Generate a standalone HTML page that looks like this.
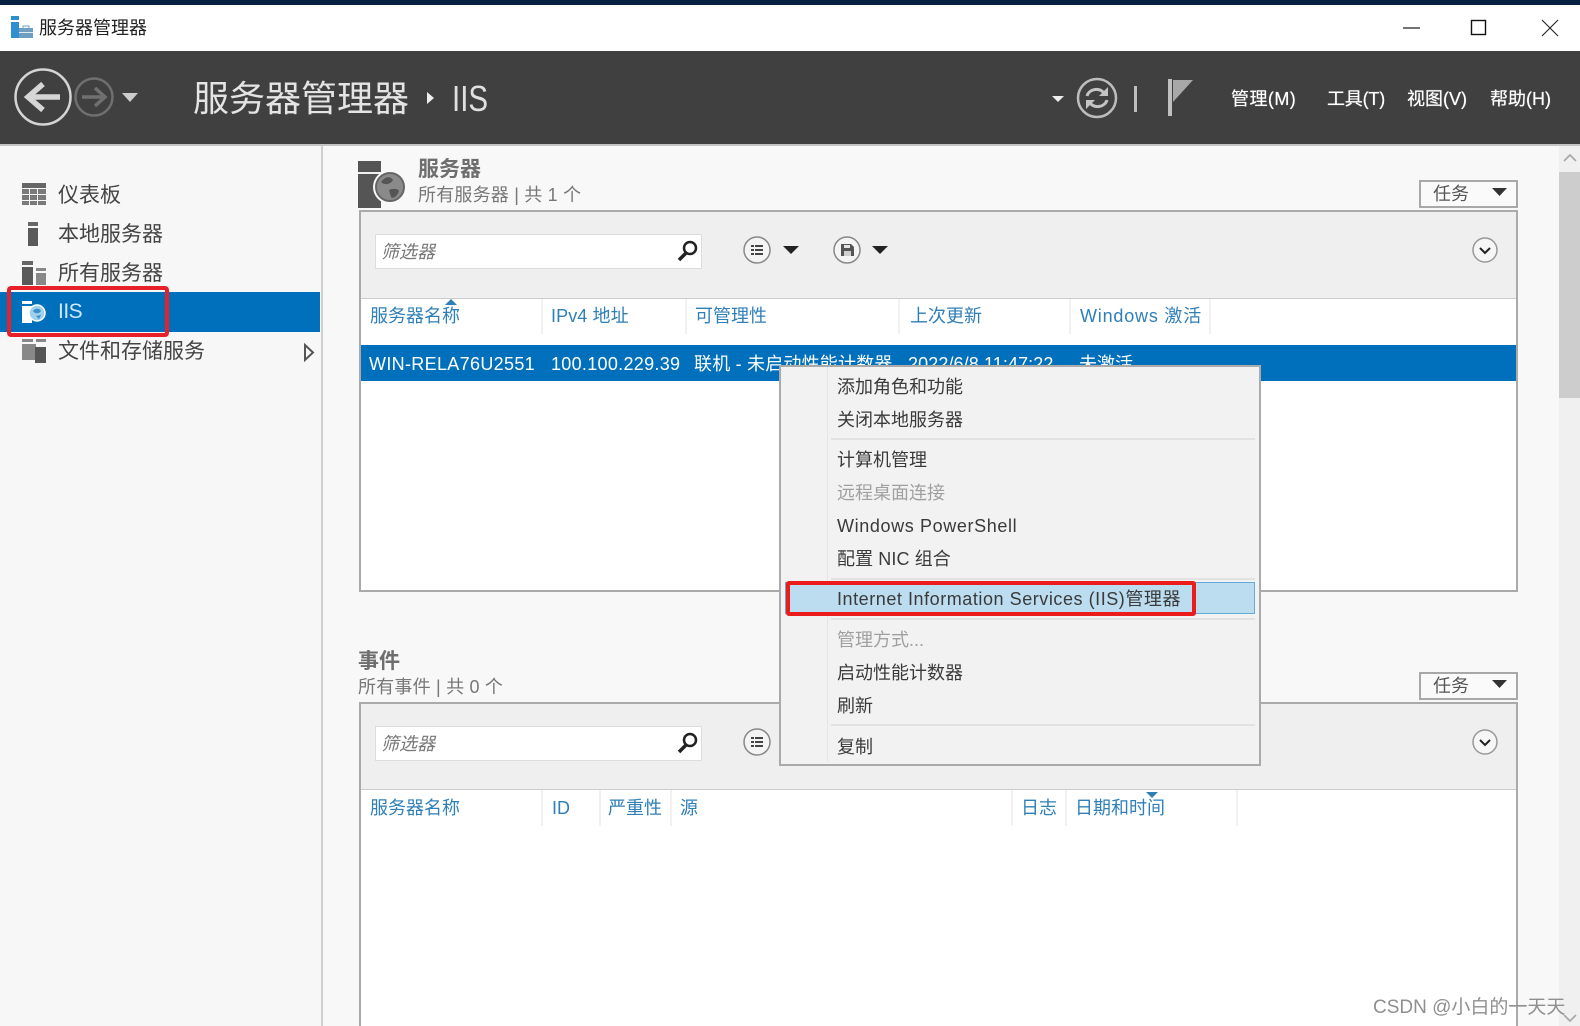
<!DOCTYPE html>
<html lang="zh">
<head>
<meta charset="utf-8">
<title>服务器管理器</title>
<style>
html,body{margin:0;padding:0;width:1580px;height:1026px;overflow:hidden;background:#f8f8f8}
#r{position:absolute;left:0;top:0;width:1580px;height:1026px;overflow:hidden;filter:blur(.35px);font-family:"Liberation Sans","Noto Sans CJK SC",sans-serif;color:#333}
.b{position:absolute}
.t{position:absolute;white-space:nowrap;line-height:30px;height:30px;font-size:18px}
.h{color:#2f7fb8}
.m{color:#3a3a3a;left:837px}
.g{color:#a0a0a0}
.w{color:#fff}
.s{position:absolute;top:0;width:2px;background:#f1f1f1}
svg{position:absolute;overflow:visible}
</style>
</head>
<body>
<div id="r">
<!-- top strip / title bar -->
<div class="b" style="left:0;top:0;width:1580px;height:5px;background:#04213f"></div>
<div class="b" style="left:0;top:5px;width:1580px;height:46px;background:#fff"></div>
<svg style="left:11px;top:16px" width="24" height="24" viewBox="0 0 24 24">
<rect x="0" y="0" width="8" height="22" fill="#2f8fd0"/><rect x="0" y="4" width="8" height="2" fill="#fff"/>
<rect x="8" y="12" width="14" height="10" fill="#6f9fc0"/><rect x="12" y="10" width="6" height="3" fill="none" stroke="#6f9fc0"/><rect x="8" y="16" width="14" height="1" fill="#dfeaf2"/>
</svg>
<div class="t" style="left:39px;top:13px;color:#222">服务器管理器</div>
<svg style="left:1400px;top:15px" width="165" height="25">
<path d="M3 13H20" stroke="#222" stroke-width="1.3"/>
<rect x="71.500" y="5.500" width="14" height="14" fill="none" stroke="#111" stroke-width="1.400"/>
<path d="M142 5L158 21M158 5L142 21" stroke="#222" stroke-width="1.100"/>
</svg>

<!-- dark header -->
<div class="b" style="left:0;top:51px;width:1580px;height:93px;background:#404040"></div>
<div class="b" style="left:0;top:144px;width:1580px;height:2px;background:#c4c4c4"></div>
<svg style="left:0;top:51px" width="150" height="93">
<circle cx="43" cy="46" r="27.500" fill="none" stroke="#d4d4d4" stroke-width="2.500"/>
<path d="M60 46H32M43 33L28 46L43 59" fill="none" stroke="#d6d6d6" stroke-width="5.500"/>
<circle cx="94" cy="46" r="18.500" fill="none" stroke="#6f6f6f" stroke-width="2.500"/>
<path d="M82 46H102M95 37L105 46L95 55" fill="none" stroke="#707070" stroke-width="3.500"/>
<path d="M122 42H138L130 51Z" fill="#ccc"/>
</svg>
<div class="t" style="left:193px;top:84px;font-size:36px;color:#e4e4e4">服务器管理器</div>
<svg style="left:425px;top:90px" width="12" height="16"><path d="M2 2L9 8L2 14Z" fill="#eee"/></svg>
<div class="t" style="left:452px;top:84px;font-size:36px;color:#e0e0e0;transform:scaleX(.82);transform-origin:0 50%">IIS</div>
<svg style="left:1050px;top:70px" width="150" height="55">
<path d="M2 26H14L8 32Z" fill="#eee"/>
<circle cx="47" cy="28" r="19" fill="none" stroke="#bdbdbd" stroke-width="2.500"/>
<path d="M37 26C39 19 49 17 54 23M57 30C55 37 45 39 40 33" fill="none" stroke="#c4c4c4" stroke-width="3"/>
<path d="M58 17V26H49ZM36 39V30H45Z" fill="#c4c4c4"/>
<rect x="84" y="16" width="3" height="26" fill="#bdbdbd"/>
<rect x="118" y="9" width="4" height="37" fill="#c0c0c0"/>
<path d="M123 10H143L123 32Z" fill="#a8a8a8"/>
</svg>
<div class="t w" style="left:1231px;top:84px;letter-spacing:.45px;text-shadow:0 0 .6px #fff">管理(M)</div>
<div class="t w" style="left:1327px;top:84px;letter-spacing:-.2px;text-shadow:0 0 .6px #fff">工具(T)</div>
<div class="t w" style="left:1407px;top:84px;text-shadow:0 0 .6px #fff">视图(V)</div>
<div class="t w" style="left:1490px;top:84px;text-shadow:0 0 .6px #fff">帮助(H)</div>

<!-- sidebar -->
<div class="b" style="left:0;top:146px;width:321px;height:880px;background:#f7f7f7"></div>
<div class="b" style="left:321px;top:146px;width:2px;height:880px;background:#cfcfcf"></div>
<div class="b" style="left:0;top:292px;width:320px;height:40px;background:#006fbc"></div>
<svg style="left:0;top:146px" width="320" height="230">
<g fill="#666">
<rect x="22" y="37" width="24" height="5"/>
<path d="M22 43h7v5h-7zM30 43h7v5h-7zM38 43h8v5h-8zM22 49h7v5h-7zM30 49h7v5h-7zM38 49h8v5h-8zM22 55h7v4h-7zM30 55h7v4h-7zM38 55h8v4h-8z" fill="#7a7a7a"/>
<rect x="28" y="76" width="10" height="4"/><rect x="28" y="82" width="10" height="18" fill="#5a5a5a"/>
<rect x="22" y="115" width="11" height="4"/><rect x="22" y="121" width="11" height="18" fill="#5a5a5a"/>
<rect x="36" y="122" width="10" height="3" fill="#888"/><rect x="36" y="127" width="10" height="12" fill="#888"/>
<path d="M22 193h11v3H22zM22 198h14v16H22zM36 193h10v3H36z" fill="#888"/>
<rect x="35" y="201" width="11" height="16" fill="#555"/>
</g>
<path d="M22 155h10v3H22zM22 160h10v17H22z" fill="#fff"/>
<circle cx="37" cy="167" r="8" fill="#9fd0ee" stroke="#fff" stroke-width="1.500"/>
<path d="M33 165C35 162 40 162 41 165C39 168 35 168 33 165ZM36 170L41 169L39 173Z" fill="#3d8fc8"/>
<path d="M305 199L313 206.500L305 214Z" fill="none" stroke="#555" stroke-width="2"/>
</svg>
<div class="t" style="left:58px;top:181px;font-size:21px;color:#444">仪表板</div>
<div class="t" style="left:58px;top:220px;font-size:21px;color:#444">本地服务器</div>
<div class="t" style="left:58px;top:259px;font-size:21px;color:#444">所有服务器</div>
<div class="t" style="left:58px;top:297px;font-size:21px;color:#cfeaff;letter-spacing:-.5px">IIS</div>
<div class="t" style="left:58px;top:337px;font-size:21px;color:#444">文件和存储服务</div>

<!-- server section -->
<svg style="left:355px;top:158px" width="55" height="52">
<rect x="3" y="3" width="23" height="47" fill="#555"/><rect x="3" y="14" width="23" height="2" fill="#f0f0f0"/>
<circle cx="35" cy="29" r="17" fill="#f8f8f8"/>
<circle cx="35" cy="29" r="14" fill="#8a8a8a" stroke="#666" stroke-width="2"/>
<path d="M26 24C30 18 36 18 38 22C36 26 30 28 26 24ZM34 32C38 30 44 31 44 33C42 39 38 41 36 39Z" fill="#555"/>
</svg>
<div class="t" style="left:418px;top:155px;font-weight:bold;color:#6e6e6e;font-size:21px">服务器</div>
<div class="t" style="left:418px;top:180px;color:#777;letter-spacing:.2px">所有服务器 | 共 1 个</div>
<div class="b" style="left:1419px;top:180px;width:95px;height:24px;border:2px solid #a8a8a8;background:#fafafa"></div>
<div class="t" style="left:1433px;top:179px;color:#555">任务</div>
<svg style="left:1490px;top:187px" width="20" height="12"><path d="M2 1H17L9.500 9Z" fill="#333"/></svg>

<div class="b" style="left:359px;top:210px;width:1155px;height:378px;border:2px solid #aaa;background:#fff"></div>
<div class="b" style="left:361px;top:212px;width:1155px;height:86px;background:#efefef;border-bottom:1px solid #ccc"></div>
<div class="b" style="left:375px;top:234px;width:325px;height:33px;background:#fff;border:1px solid #ddd"></div>
<div class="t" style="left:381px;top:237px;font-style:italic;color:#777">筛选器</div>
<svg style="left:676px;top:238px" width="24" height="24"><circle cx="14" cy="10" r="6" fill="none" stroke="#222" stroke-width="2.500"/><path d="M10 15L3 22" stroke="#222" stroke-width="3.500"/></svg>
<svg style="left:740px;top:232px" width="170" height="36">
<circle cx="17" cy="18" r="13" fill="#f4f4f4" stroke="#888" stroke-width="1.500"/>
<path d="M11 13h3v2h-3zM15 13h8v2h-8zM11 17h3v2h-3zM15 17h8v2h-8zM11 21h3v2h-3zM15 21h8v2h-8z" fill="#444"/>
<path d="M43 14H59L51 22Z" fill="#222"/>
<circle cx="107" cy="18" r="13" fill="#f4f4f4" stroke="#888" stroke-width="1.500"/>
<path d="M101 12H111L114 15V24H101Z" fill="#555"/>
<rect x="104" y="13" width="6" height="3" fill="#e4e4e4"/><rect x="104" y="19" width="7" height="5" fill="#d0d0d0"/>
<path d="M132 14H148L140 22Z" fill="#222"/>
</svg>
<svg style="left:1471px;top:236px" width="28" height="28"><circle cx="14" cy="14" r="12" fill="#f6f6f6" stroke="#999" stroke-width="1.500"/><path d="M9 12L14 17L19 12" fill="none" stroke="#222" stroke-width="2"/></svg>

<div class="s" style="left:541px;top:299px;height:35px"></div>
<div class="s" style="left:685px;top:299px;height:35px"></div>
<div class="s" style="left:898px;top:299px;height:35px"></div>
<div class="s" style="left:1069px;top:299px;height:35px"></div>
<div class="s" style="left:1209px;top:299px;height:35px"></div>
<svg style="left:444px;top:298px" width="14" height="9"><path d="M1 7L7 1L13 7Z" fill="#2f7fb8"/></svg>
<div class="t h" style="left:370px;top:301px">服务器名称</div>
<div class="t h" style="left:551px;top:301px;letter-spacing:.1px">IPv4 地址</div>
<div class="t h" style="left:695px;top:301px">可管理性</div>
<div class="t h" style="left:910px;top:301px">上次更新</div>
<div class="t h" style="left:1080px;top:301px;letter-spacing:.8px">Windows 激活</div>

<div class="b" style="left:361px;top:345px;width:1155px;height:36px;background:#006fbc"></div>
<div class="t w" style="left:369px;top:349px;letter-spacing:.33px">WIN-RELA76U2551</div>
<div class="t w" style="left:551px;top:349px;letter-spacing:.3px">100.100.229.39</div>
<div class="t w" style="left:694px;top:349px;letter-spacing:.2px">联机 - 未启动性能计数器</div>
<div class="t w" style="left:908px;top:349px;letter-spacing:.1px">2022/6/8 11:47:22</div>
<div class="t w" style="left:1079px;top:349px">未激活</div>

<!-- events section -->
<div class="t" style="left:358px;top:647px;font-weight:bold;color:#6e6e6e;font-size:21px">事件</div>
<div class="t" style="left:358px;top:672px;color:#777;letter-spacing:.2px">所有事件 | 共 0 个</div>
<div class="b" style="left:1419px;top:672px;width:95px;height:24px;border:2px solid #a8a8a8;background:#fafafa"></div>
<div class="t" style="left:1433px;top:671px;color:#555">任务</div>
<svg style="left:1490px;top:679px" width="20" height="12"><path d="M2 1H17L9.500 9Z" fill="#333"/></svg>

<div class="b" style="left:359px;top:702px;width:1155px;height:340px;border:2px solid #aaa;background:#fff"></div>
<div class="b" style="left:361px;top:704px;width:1155px;height:85px;background:#efefef;border-bottom:1px solid #ccc"></div>
<div class="b" style="left:375px;top:726px;width:325px;height:33px;background:#fff;border:1px solid #ddd"></div>
<div class="t" style="left:381px;top:729px;font-style:italic;color:#777">筛选器</div>
<svg style="left:676px;top:730px" width="24" height="24"><circle cx="14" cy="10" r="6" fill="none" stroke="#222" stroke-width="2.500"/><path d="M10 15L3 22" stroke="#222" stroke-width="3.500"/></svg>
<svg style="left:740px;top:724px" width="36" height="36">
<circle cx="17" cy="18" r="13" fill="#f4f4f4" stroke="#888" stroke-width="1.500"/>
<path d="M11 13h3v2h-3zM15 13h8v2h-8zM11 17h3v2h-3zM15 17h8v2h-8zM11 21h3v2h-3zM15 21h8v2h-8z" fill="#444"/>
</svg>
<svg style="left:1471px;top:728px" width="28" height="28"><circle cx="14" cy="14" r="12" fill="#f6f6f6" stroke="#999" stroke-width="1.500"/><path d="M9 12L14 17L19 12" fill="none" stroke="#222" stroke-width="2"/></svg>

<div class="s" style="left:541px;top:790px;height:36px"></div>
<div class="s" style="left:599px;top:790px;height:36px"></div>
<div class="s" style="left:670px;top:790px;height:36px"></div>
<div class="s" style="left:1011px;top:790px;height:36px"></div>
<div class="s" style="left:1065px;top:790px;height:36px"></div>
<div class="s" style="left:1236px;top:790px;height:36px"></div>
<svg style="left:1145px;top:791px" width="14" height="8"><path d="M1 1H13L7 7Z" fill="#2f7fb8"/></svg>
<div class="t h" style="left:370px;top:793px">服务器名称</div>
<div class="t h" style="left:552px;top:793px">ID</div>
<div class="t h" style="left:608px;top:793px">严重性</div>
<div class="t h" style="left:680px;top:793px">源</div>
<div class="t h" style="left:1021px;top:793px">日志</div>
<div class="t h" style="left:1075px;top:793px">日期和时间</div>

<!-- scrollbar -->
<div class="b" style="left:1559px;top:146px;width:21px;height:880px;background:#f0f0f0"></div>
<div class="b" style="left:1559px;top:172px;width:21px;height:226px;background:#cdcdcd"></div>
<svg style="left:1562px;top:152px" width="16" height="12"><path d="M2 9L8 3L14 9" fill="none" stroke="#aaa" stroke-width="1.800"/></svg>
<svg style="left:1562px;top:1012px" width="16" height="12"><path d="M2 3L8 9L14 3" fill="none" stroke="#aaa" stroke-width="1.800"/></svg>

<!-- context menu -->
<div class="b" style="left:779px;top:365px;width:478px;height:397px;border:2px solid #aaa;background:#f2f2f2"></div>
<div class="b" style="left:827px;top:367px;width:1px;height:395px;background:#e6e6e6"></div>
<div class="b" style="left:831px;top:438px;width:424px;height:2px;background:#e2e2e2"></div>
<div class="b" style="left:831px;top:578px;width:424px;height:2px;background:#e2e2e2"></div>
<div class="b" style="left:831px;top:618px;width:424px;height:2px;background:#e2e2e2"></div>
<div class="b" style="left:831px;top:724px;width:424px;height:2px;background:#e2e2e2"></div>
<div class="b" style="left:785px;top:582px;width:468px;height:30px;background:#bcdcef;border:1px solid #62aad8"></div>
<div class="t m" style="top:372px">添加角色和功能</div>
<div class="t m" style="top:405px">关闭本地服务器</div>
<div class="t m" style="top:445px">计算机管理</div>
<div class="t m g" style="top:478px">远程桌面连接</div>
<div class="t m" style="top:511px;letter-spacing:.62px">Windows PowerShell</div>
<div class="t m" style="top:544px;letter-spacing:.1px">配置 NIC 组合</div>
<div class="t m" style="top:584px;letter-spacing:.55px">Internet Information Services (IIS)管理器</div>
<div class="t m g" style="top:625px">管理方式...</div>
<div class="t m" style="top:658px">启动性能计数器</div>
<div class="t m" style="top:691px">刷新</div>
<div class="t m" style="top:732px">复制</div>

<!-- red annotation boxes -->
<div class="b" style="left:7px;top:286px;width:154px;height:43px;border:4px solid #e8202a;border-radius:4px"></div>
<div class="b" style="left:786px;top:581px;width:402px;height:27px;border:4px solid #ea1c1c;border-radius:3px"></div>

<!-- watermark -->
<div class="t" style="left:1373px;top:993px;font-size:19px;color:#8f8f8f">CSDN @小白的一天天</div>
</div>
</body>
</html>
